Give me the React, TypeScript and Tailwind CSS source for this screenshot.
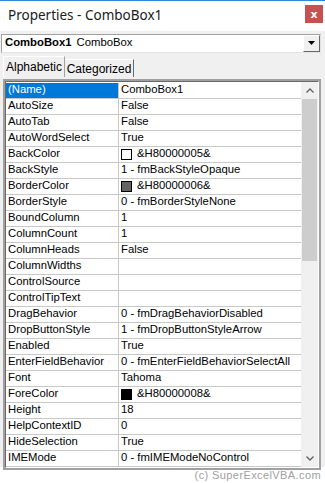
import React from "react";

type Row = { n: string; v: string; sw?: string };

const rows: Row[] = [
  { n: "(Name)", v: "ComboBox1" },
  { n: "AutoSize", v: "False" },
  { n: "AutoTab", v: "False" },
  { n: "AutoWordSelect", v: "True" },
  { n: "BackColor", v: "&H80000005&", sw: "#ffffff" },
  { n: "BackStyle", v: "1 - fmBackStyleOpaque" },
  { n: "BorderColor", v: "&H80000006&", sw: "#646464" },
  { n: "BorderStyle", v: "0 - fmBorderStyleNone" },
  { n: "BoundColumn", v: "1" },
  { n: "ColumnCount", v: "1" },
  { n: "ColumnHeads", v: "False" },
  { n: "ColumnWidths", v: "" },
  { n: "ControlSource", v: "" },
  { n: "ControlTipText", v: "" },
  { n: "DragBehavior", v: "0 - fmDragBehaviorDisabled" },
  { n: "DropButtonStyle", v: "1 - fmDropButtonStyleArrow" },
  { n: "Enabled", v: "True" },
  { n: "EnterFieldBehavior", v: "0 - fmEnterFieldBehaviorSelectAll" },
  { n: "Font", v: "Tahoma" },
  { n: "ForeColor", v: "&H80000008&", sw: "#000000" },
  { n: "Height", v: "18" },
  { n: "HelpContextID", v: "0" },
  { n: "HideSelection", v: "True" },
  { n: "IMEMode", v: "0 - fmIMEModeNoControl" },
];

export default function App() {
  return (
    <div
      className="w-[325px] h-[483px] bg-white flex flex-col overflow-hidden text-black"
      style={{ fontFamily: '"Liberation Sans", Arial, sans-serif' }}
    >
      <div className="h-px bg-[#2b88d8]" />
      {/* Title bar */}
      <div className="h-[31px] flex items-center justify-between pl-[8px] pr-[2px] bg-white">
        <span
          className="text-[13.5px] text-[#1a1a1a] mb-[2px]"
          style={{ fontFamily: '"Noto Sans", sans-serif' }}
        >
          Properties - ComboBox1
        </span>
        <div className="w-[18px] h-[18px] bg-[#c75050] flex items-center justify-center mb-[3px]">
          <span className="text-white text-[11px] font-bold leading-none" style={{ fontFamily: '"DejaVu Sans", sans-serif' }}>x</span>
        </div>
      </div>
      {/* Body */}
      <div className="bg-[#f0f0f0] flex flex-col pl-[1px] pr-[4px] pt-[3px] h-[436px]">
        {/* Combo */}
        <div className="h-[19px] bg-white border border-t-[#a0a0a0] border-l-[#a0a0a0] border-b-[#e3e3e3] border-r-[#e3e3e3] flex items-center">
          <div className="flex-1 pl-[3px] text-[11.3px] leading-none flex items-center gap-[5px]">
            <span className="font-bold">ComboBox1</span>
            <span>ComboBox</span>
          </div>
          <div className="w-[17px] h-[17px] bg-[#f0f0f0] border border-t-white border-l-white border-b-[#696969] border-r-[#696969] flex items-center justify-center">
            <svg width="7" height="4" viewBox="0 0 7 4">
              <path d="M0 0h7L3.5 4z" fill="#000" />
            </svg>
          </div>
        </div>
        {/* Tabs */}
        <div className="flex items-end pl-[2px] mt-[3px] h-[21px] relative z-10 text-[12px]">
          <div className="h-[21px] w-[62px] bg-[#f0f0f0] border-t border-l border-r border-t-white border-l-white border-r-[#a0a0a0] flex items-center justify-center pt-[1px]">
            Alphabetic
          </div>
          <div className="h-[18px] w-[69px] bg-[#f0f0f0] border-t border-r border-t-white border-r-[#696969] flex items-center justify-center pt-[2px]">
            Categorized
          </div>
        </div>
        {/* Grid frame */}
        <div className="ml-[2px] mt-[2px] flex-1 border-2 border-[#a0a0a0] flex flex-col">
          <div className="flex-1 border border-t-[#696969] border-l-[#696969] border-b-white border-r-white flex bg-white">
            <div className="flex-1 flex flex-col pt-[1px]">
              {rows.map((r, i) => (
                <div key={r.n} className="h-[16px] flex border-b border-[#c8c8c8] text-[11.3px] leading-none">
                  <div
                    className={
                      "w-[113px] border-r border-[#c8c8c8] flex items-center pl-[2px] " +
                      (i === 0 ? "bg-[#0078d7] text-white" : "")
                    }
                  >
                    {r.n}
                  </div>
                  <div className="flex-1 flex items-center pl-[2px] gap-[5px] whitespace-nowrap overflow-hidden">
                    {r.sw && (
                      <div
                        className="w-[11px] h-[11px] border border-black shrink-0"
                        style={{ backgroundColor: r.sw }}
                      />
                    )}
                    <span>{r.v}</span>
                  </div>
                </div>
              ))}
            </div>
            {/* Scrollbar */}
            <div className="w-[17px] bg-[#f0f0f0] flex flex-col">
              <div className="h-[17px] flex items-center justify-center">
                <svg width="8" height="5" viewBox="0 0 8 5">
                  <path d="M0.5 4.5L4 1l3.5 3.5" fill="none" stroke="#606060" strokeWidth="1.3" />
                </svg>
              </div>
              <div className="h-[162px] mx-[1px] bg-[#cdcdcd]" />
              <div className="flex-1" />
              <div className="h-[17px] flex items-center justify-center">
                <svg width="8" height="5" viewBox="0 0 8 5">
                  <path d="M0.5 0.5L4 4l3.5-3.5" fill="none" stroke="#606060" strokeWidth="1.3" />
                </svg>
              </div>
            </div>
          </div>
        </div>
      </div>
      {/* Footer */}
      <div className="flex-1 flex items-center justify-end pr-[4px]">
        <span className="tracking-[0.4px] text-[#a0a0a0] text-[11px]" style={{ fontFamily: '"Liberation Sans", Arial, sans-serif' }}>
          (c) SuperExcelVBA.com
        </span>
      </div>
    </div>
  );
}
